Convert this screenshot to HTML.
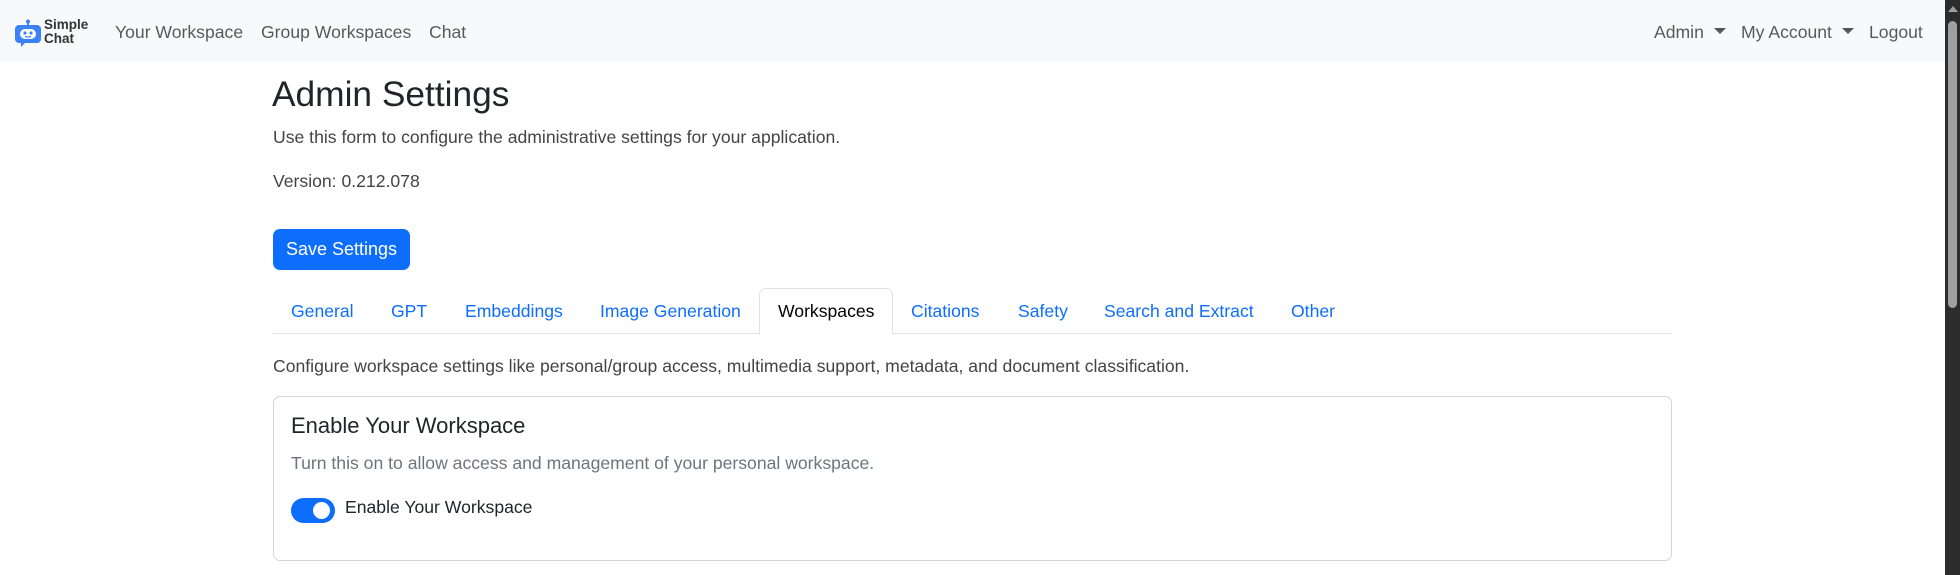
<!DOCTYPE html>
<html><head><meta charset="utf-8"><style>
*{margin:0;padding:0;box-sizing:border-box}
body{width:1960px;height:575px;overflow:hidden;background:#fff;font-family:"Liberation Sans",sans-serif;color:#212529;position:relative}
.a{position:absolute;white-space:nowrap}
.nav{position:absolute;left:0;top:0;width:1945px;height:62px;background:#f8f9fa}
.nl{font-size:17.6px;color:rgba(0,0,0,.65);top:22px}
.caret{display:inline-block;width:0;height:0;border-left:6px solid transparent;border-right:6px solid transparent;border-top:6px solid rgba(0,0,0,.65);vertical-align:4px;margin-left:10px}
.tab{font-size:17.6px;color:#0d6efd;top:301px}
</style></head><body>
<div class="nav">
 <svg class="a" style="left:15px;top:19px" width="26" height="28" viewBox="0 0 26 28">
  <circle cx="13" cy="2.5" r="2" fill="#3b82f6"/><rect x="12" y="3" width="2" height="4" fill="#3b82f6"/>
  <path d="M4 6h18a4 4 0 0 1 4 4v10a4 4 0 0 1-4 4H10l-4 4v-4H4a4 4 0 0 1-4-4V10a4 4 0 0 1 4-4z" fill="#3b82f6"/>
  <rect x="5" y="10" width="16" height="10" rx="5" fill="#fff"/>
  <circle cx="10" cy="14" r="1.6" fill="#3b82f6"/><circle cx="16" cy="14" r="1.6" fill="#3b82f6"/>
  <path d="M10 17.3q3 1.5 6 0" stroke="#3b82f6" stroke-width="1.2" fill="none"/>
 </svg>
 <div class="a" style="left:44px;top:18px;font-size:13.5px;line-height:14px;font-weight:bold;color:#333">Simple<br>Chat</div>
 <div class="a nl" style="left:115px">Your Workspace</div>
 <div class="a nl" style="left:261px">Group Workspaces</div>
 <div class="a nl" style="left:429px">Chat</div>
 <div class="a nl" style="left:1654px">Admin<span class="caret"></span></div>
 <div class="a nl" style="left:1741px">My Account<span class="caret"></span></div>
 <div class="a nl" style="left:1869px">Logout</div>
</div>
<div class="a" style="left:1945px;top:0;width:15px;height:575px;background:#2c2c2c"></div>
<div class="a" style="left:1948px;top:6px;width:0;height:0;border-left:5px solid transparent;border-right:5px solid transparent;border-bottom:6px solid #9f9f9f"></div>
<div class="a" style="left:1948px;top:21px;width:9px;height:287px;background:#9f9f9f;border-radius:5px"></div>

<div class="a" style="left:272px;top:75px;font-size:35.3px;font-weight:500">Admin Settings</div>
<div class="a" style="left:273px;top:127px;font-size:17.6px;color:#444">Use this form to configure the administrative settings for your application.</div>
<div class="a" style="left:273px;top:171px;font-size:17.6px;color:#444">Version: 0.212.078</div>
<div class="a" style="left:273px;top:229px;width:137px;height:41px;background:#0d6efd;border-radius:7px;color:#fff;font-size:18px;line-height:41px;text-align:center">Save Settings</div>

<div class="a" style="left:273px;top:333px;width:1399px;height:1px;background:#dee2e6"></div>
<div class="a" style="left:759px;top:288px;width:134px;height:46px;background:#fff;border:1px solid #dee2e6;border-bottom:none;border-radius:7px 7px 0 0"></div>
<div class="a tab" style="left:291px">General</div>
<div class="a tab" style="left:391px">GPT</div>
<div class="a tab" style="left:465px">Embeddings</div>
<div class="a tab" style="left:600px">Image Generation</div>
<div class="a tab" style="left:778px;color:#000">Workspaces</div>
<div class="a tab" style="left:911px">Citations</div>
<div class="a tab" style="left:1018px">Safety</div>
<div class="a tab" style="left:1104px">Search and Extract</div>
<div class="a tab" style="left:1291px">Other</div>

<div class="a" style="left:273px;top:356px;font-size:17.6px;color:#444">Configure workspace settings like personal/group access, multimedia support, metadata, and document classification.</div>

<div class="a" style="left:273px;top:396px;width:1399px;height:165px;border:1px solid #d3d6d9;border-radius:7px"></div>
<div class="a" style="left:291px;top:413px;font-size:22px;font-weight:500">Enable Your Workspace</div>
<div class="a" style="left:291px;top:453px;font-size:17.6px;color:#6c757d">Turn this on to allow access and management of your personal workspace.</div>
<div class="a" style="left:291px;top:498px;width:44px;height:25px;background:#0d6efd;border-radius:13px"></div>
<div class="a" style="left:313px;top:502px;width:17px;height:17px;background:#fff;border-radius:50%"></div>
<div class="a" style="left:345px;top:497px;font-size:17.6px">Enable Your Workspace</div>
</body></html>
